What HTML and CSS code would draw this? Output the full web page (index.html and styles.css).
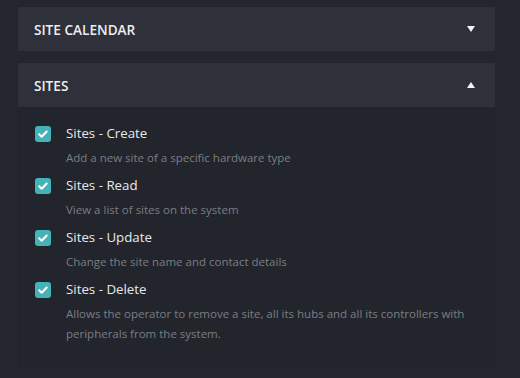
FILE: index.html
```html
<!DOCTYPE html>
<html lang="en">
<head>
    <meta charset="UTF-8">
    <title>Permissions</title>
    <link rel="stylesheet" href="styles.css">
</head>
<body>
    <div class="panel-list">
        <div class="panel">
            <div class="panel-header">
                <span class="panel-title">SITE CALENDAR</span>
                <span class="caret caret-down"></span>
            </div>
        </div>

        <div class="panel open">
            <div class="panel-header">
                <span class="panel-title">SITES</span>
                <span class="caret caret-up"></span>
            </div>
            <div class="panel-body">
                <div class="perm">
                    <span class="check"><svg viewBox="0 0 16 16"><path d="M4.2 8.3l2.5 2.4 5-5.2" /></svg></span>
                    <div class="perm-text">
                        <div class="perm-name">Sites - Create</div>
                        <div class="perm-desc">Add a new site of a specific hardware type</div>
                    </div>
                </div>
                <div class="perm">
                    <span class="check"><svg viewBox="0 0 16 16"><path d="M4.2 8.3l2.5 2.4 5-5.2" /></svg></span>
                    <div class="perm-text">
                        <div class="perm-name">Sites - Read</div>
                        <div class="perm-desc">View a list of sites on the system</div>
                    </div>
                </div>
                <div class="perm">
                    <span class="check"><svg viewBox="0 0 16 16"><path d="M4.2 8.3l2.5 2.4 5-5.2" /></svg></span>
                    <div class="perm-text">
                        <div class="perm-name">Sites - Update</div>
                        <div class="perm-desc">Change the site name and contact details</div>
                    </div>
                </div>
                <div class="perm">
                    <span class="check"><svg viewBox="0 0 16 16"><path d="M4.2 8.3l2.5 2.4 5-5.2" /></svg></span>
                    <div class="perm-text">
                        <div class="perm-name">Sites - Delete</div>
                        <div class="perm-desc">Allows the operator to remove a site, all its hubs and all its controllers with peripherals from the system.</div>
                    </div>
                </div>
            </div>
        </div>
    </div>
</body>
</html>
```

FILE: styles.css
```css
body {
    margin: 0;
    background: #23262d;
    font-family: 'Open Sans', sans-serif;
    color: #e6e7e9;
}

.panel-list {
    display: flex;
    flex-direction: column;
    gap: 12px;
    padding: 7px 25px 0 18px;
}

.panel-header {
    display: flex;
    align-items: center;
    justify-content: space-between;
    height: 44px;
    padding: 0 20px 0 16px;
    background: #2e313a;
}

.panel-title {
    font-size: 13.6px;
    font-weight: 600;
    color: #eceef0;
}

.caret {
    width: 0;
    height: 0;
    border-left: 4.5px solid transparent;
    border-right: 4.5px solid transparent;
}

.caret-down {
    border-top: 6px solid #f2f3f5;
}

.caret-up {
    border-bottom: 6px solid #f2f3f5;
}

.panel-body {
    display: flex;
    flex-direction: column;
    gap: 7px;
    padding: 16px 16px 22px 16px;
    background: #22252c;
    border: 1px solid #1f2227;
    border-top: none;
}

.perm {
    display: flex;
    gap: 15px;
}

.check {
    flex: none;
    width: 16px;
    height: 16px;
    margin-top: 3px;
    border-radius: 3px;
    background: #44b3b8;
}

.check svg {
    display: block;
    width: 16px;
    height: 16px;
    fill: none;
    stroke: #fff;
    stroke-width: 2;
    stroke-linecap: round;
    stroke-linejoin: round;
}

.perm-name {
    font-size: 13.3px;
    line-height: 20px;
    color: #e8e9eb;
}

.perm-desc {
    margin-top: 5px;
    font-size: 11.5px;
    line-height: 20px;
    color: #7b7e84;
}
```
